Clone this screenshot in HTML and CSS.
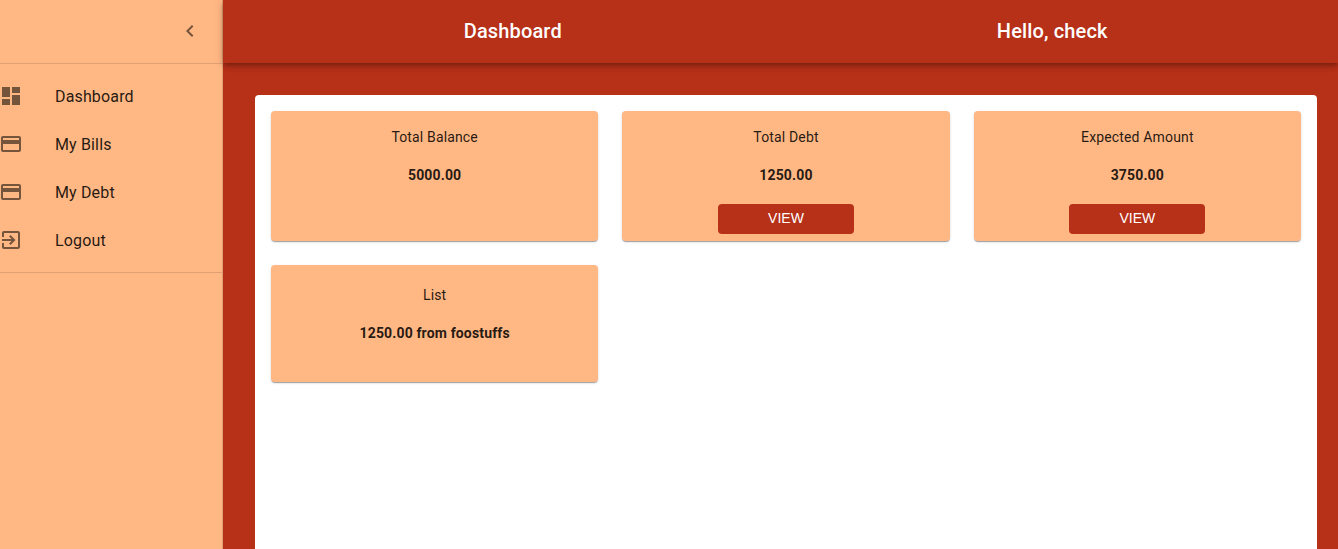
FILE: index.html
```
<!DOCTYPE html>
<html lang="en">
<head>
<meta charset="utf-8">
<title>Dashboard</title>
<link rel="stylesheet" href="styles.css">
</head>
<body>
<div class="app">
  <aside class="drawer">
    <div class="drawer-top">
      <button class="icon-button" type="button" aria-label="Collapse menu">
        <svg class="icon" viewBox="0 0 24 24"><path d="M15.41 7.41 14 6l-6 6 6 6 1.41-1.41L10.83 12z"/></svg>
      </button>
    </div>
    <nav class="menu">
      <a class="menu-item" href="#dashboard"><svg class="icon" viewBox="0 0 24 24"><path d="M3 13h8V3H3v10zm0 8h8v-6H3v6zm10 0h8V11h-8v10zm0-18v6h8V3h-8z"/></svg>Dashboard</a>
      <a class="menu-item" href="#bills"><svg class="icon" viewBox="0 0 24 24"><path d="M20 4H4c-1.11 0-1.99.89-1.99 2L2 18c0 1.11.89 2 2 2h16c1.11 0 2-.89 2-2V6c0-1.11-.89-2-2-2zm0 14H4v-6h16v6zm0-10H4V6h16v2z"/></svg>My Bills</a>
      <a class="menu-item" href="#debt"><svg class="icon" viewBox="0 0 24 24"><path d="M20 4H4c-1.11 0-1.99.89-1.99 2L2 18c0 1.11.89 2 2 2h16c1.11 0 2-.89 2-2V6c0-1.11-.89-2-2-2zm0 14H4v-6h16v6zm0-10H4V6h16v2z"/></svg>My Debt</a>
      <a class="menu-item" href="#logout"><svg class="icon" viewBox="0 0 24 24"><path d="M10.09 15.59 11.5 17l5-5-5-5-1.41 1.41L12.67 11H3v2h9.67l-2.58 2.59zM19 3H5c-1.11 0-2 .9-2 2v4h2V5h14v14H5v-4H3v4c0 1.1.89 2 2 2h14c1.1 0 2-.9 2-2V5c0-1.1-.9-2-2-2z"/></svg>Logout</a>
    </nav>
  </aside>
  <div class="page">
    <header class="app-bar">
      <h1 class="title">Dashboard</h1>
      <p class="title">Hello, check</p>
    </header>
    <main class="content">
      <div class="panel">
        <section class="card"><h2 class="label">Total Balance</h2><p class="value">5000.00</p></section>
        <section class="card"><h2 class="label">Total Debt</h2><p class="value">1250.00</p><button class="view" type="button">VIEW</button></section>
        <section class="card"><h2 class="label">Expected Amount</h2><p class="value">3750.00</p><button class="view" type="button">VIEW</button></section>
        <section class="card card-list"><h2 class="label">List</h2><p class="value">1250.00 from foostuffs</p></section>
      </div>
    </main>
  </div>
</div>
</body>
</html>
```
FILE: styles.css
```
* { box-sizing: border-box; }

body {
  margin: 0;
  font-family: Roboto, sans-serif;
  color: rgba(0, 0, 0, 0.87);
  background: #b73018;
}

.app { display: flex; min-height: 100vh; }

.drawer {
  flex: 0 0 223px;
  background: #ffb784;
  border-right: 1px solid rgba(0, 0, 0, 0.12);
}

.drawer-top {
  display: flex;
  align-items: center;
  justify-content: flex-end;
  height: 64px;
  padding: 0 8px 2px;
  border-bottom: 1px solid rgba(0, 0, 0, 0.12);
}

.icon-button {
  display: flex;
  padding: 12px;
  border: 0;
  background: none;
}

.icon { width: 24px; height: 24px; fill: rgba(0, 0, 0, 0.54); }

.menu {
  padding: 8px 0;
  border-bottom: 1px solid rgba(0, 0, 0, 0.12);
}

.menu-item {
  display: flex;
  align-items: center;
  gap: 32px;
  height: 48px;
  margin-left: -1px;
  color: inherit;
  font-size: 16px;
  letter-spacing: 0.00938em;
  text-decoration: none;
}

.page { flex: 1; display: flex; flex-direction: column; min-width: 0; }

.app-bar {
  display: grid;
  grid-template-columns: 1fr 1fr;
  align-items: center;
  height: 63px;
  padding: 0 16px 2px 20px;
  color: #fff;
  box-shadow: 0 2px 4px -1px rgba(0, 0, 0, 0.2), 0 4px 5px 0 rgba(0, 0, 0, 0.14), 0 1px 10px 0 rgba(0, 0, 0, 0.12);
}

.title {
  margin: 0;
  font-size: 20px;
  font-weight: 500;
  line-height: 32px;
  letter-spacing: 0.0075em;
  text-align: center;
}

.content { flex: 1; display: flex; padding: 32px 21px 0 32px; }

.panel {
  flex: 1;
  display: grid;
  grid-template-columns: repeat(3, 1fr);
  align-content: start;
  gap: 24px;
  padding: 16px;
  border-radius: 4px 4px 0 0;
  background: #fff;
}

.card {
  display: flex;
  flex-direction: column;
  align-items: center;
  min-height: 130px;
  padding: 16px 16px 7px;
  border-radius: 4px;
  background: #ffb784;
  box-shadow: 0 2px 1px -1px rgba(0, 0, 0, 0.2), 0 1px 1px 0 rgba(0, 0, 0, 0.14), 0 1px 3px 0 rgba(0, 0, 0, 0.12);
}

.card-list { min-height: 117px; padding-top: 20px; }

.label, .value {
  margin: 0;
  font-size: 14px;
  line-height: 20px;
  letter-spacing: 0.01071em;
}

.label { font-weight: 400; }
.value { margin-top: 18px; font-weight: 700; }

.view {
  width: 46%;
  height: 30px;
  margin-top: 19px;
  padding: 0 0 2px;
  border: 0;
  border-radius: 4px;
  color: #fff;
  background: #b73018;
  font-family: "Liberation Sans", Arial, sans-serif;
  font-size: 14px;
}
```
